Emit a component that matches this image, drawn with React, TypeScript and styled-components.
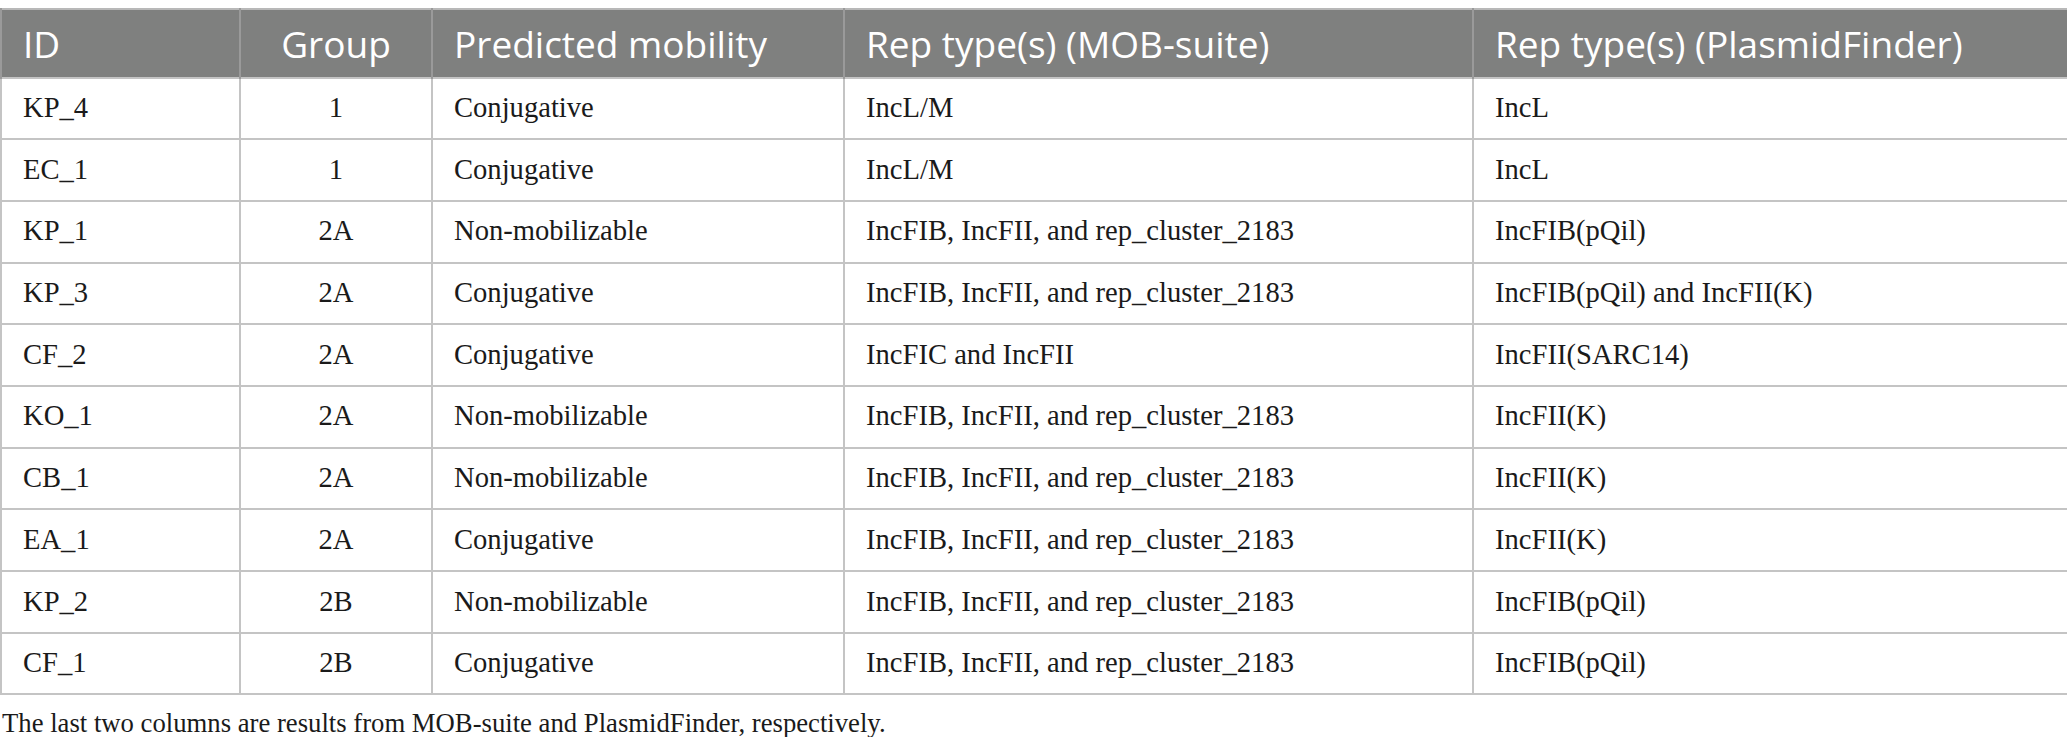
import React from "react";
import styled, { createGlobalStyle } from "styled-components";

const GlobalStyle = createGlobalStyle`
  html, body {
    margin: 0;
    padding: 0;
    background: #ffffff;
  }
  body {
    padding-top: 8px;
  }
`;

const Wrapper = styled.div`
  width: 2067px;
`;

const Table = styled.table`
  width: 2067px;
  border-collapse: collapse;
  table-layout: fixed;
  border: 2px solid #b8b8b8;
`;

const HeadCell = styled.th<{ $center?: boolean }>`
  background: #7f807f;
  color: #ffffff;
  font-family: "Open Sans", "Noto Sans", sans-serif;
  font-weight: 400;
  font-size: 37px;
  height: 66.5px;
  padding: 0 21px;
  text-align: ${(p) => (p.$center ? "center" : "left")};
  border: 2px solid #9a9a9a;
  border-top: none;
  border-bottom: none;
  white-space: nowrap;
  line-height: 1;
`;

const Cell = styled.td<{ $center?: boolean }>`
  font-family: "Liberation Serif", "Times New Roman", serif;
  font-size: 28.6px;
  color: #1a1a1a;
  height: 59.7px;
  padding: 0 21px;
  text-align: ${(p) => (p.$center ? "center" : "left")};
  border: 2px solid #c4c4c4;
  white-space: nowrap;
  line-height: 1;
`;

const Caption = styled.p`
  margin: 15px 0 0 2px;
  font-family: "Liberation Serif", "Times New Roman", serif;
  font-size: 26.7px;
  color: #1a1a1a;
  line-height: 1;
`;

const cols = [239, 192, 412, 629, 595];

const rows: [string, string, string, string, string][] = [
  ["KP_4", "1", "Conjugative", "IncL/M", "IncL"],
  ["EC_1", "1", "Conjugative", "IncL/M", "IncL"],
  ["KP_1", "2A", "Non-mobilizable", "IncFIB, IncFII, and rep_cluster_2183", "IncFIB(pQil)"],
  ["KP_3", "2A", "Conjugative", "IncFIB, IncFII, and rep_cluster_2183", "IncFIB(pQil) and IncFII(K)"],
  ["CF_2", "2A", "Conjugative", "IncFIC and IncFII", "IncFII(SARC14)"],
  ["KO_1", "2A", "Non-mobilizable", "IncFIB, IncFII, and rep_cluster_2183", "IncFII(K)"],
  ["CB_1", "2A", "Non-mobilizable", "IncFIB, IncFII, and rep_cluster_2183", "IncFII(K)"],
  ["EA_1", "2A", "Conjugative", "IncFIB, IncFII, and rep_cluster_2183", "IncFII(K)"],
  ["KP_2", "2B", "Non-mobilizable", "IncFIB, IncFII, and rep_cluster_2183", "IncFIB(pQil)"],
  ["CF_1", "2B", "Conjugative", "IncFIB, IncFII, and rep_cluster_2183", "IncFIB(pQil)"],
];

const headers = [
  "ID",
  "Group",
  "Predicted mobility",
  "Rep type(s) (MOB-suite)",
  "Rep type(s) (PlasmidFinder)",
];

export default function App() {
  return (
    <Wrapper>
      <GlobalStyle />
      <Table>
        <colgroup>
          {cols.map((w, i) => (
            <col key={i} style={{ width: w }} />
          ))}
        </colgroup>
        <thead>
          <tr>
            {headers.map((h, i) => (
              <HeadCell key={h} $center={i === 1}>
                {h}
              </HeadCell>
            ))}
          </tr>
        </thead>
        <tbody>
          {rows.map((r) => (
            <tr key={r[0]}>
              {r.map((c, i) => (
                <Cell key={i} $center={i === 1}>
                  {c}
                </Cell>
              ))}
            </tr>
          ))}
        </tbody>
      </Table>
      <Caption>
        The last two columns are results from MOB-suite and PlasmidFinder, respectively.
      </Caption>
    </Wrapper>
  );
}
